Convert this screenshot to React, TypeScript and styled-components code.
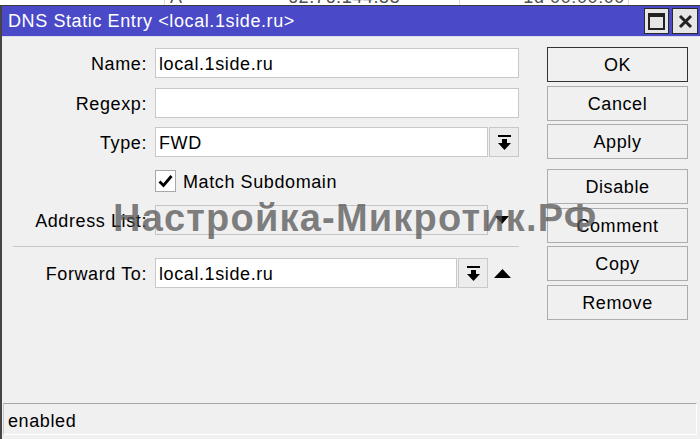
import React from "react";
import styled, { createGlobalStyle } from "styled-components";

const GlobalStyle = createGlobalStyle`
  html, body { margin: 0; padding: 0; }
  body {
    font-family: "Liberation Sans", Arial, sans-serif;
    background: #ffffff;
  }
`;

const Page = styled.div`
  position: relative;
  width: 700px;
  height: 439px;
  overflow: hidden;
  display: flex;
  flex-direction: column;
  background: #ffffff;
`;

const BackStrip = styled.div`
  height: 5px;
  flex: none;
  display: flex;
  overflow: hidden;
  background: #ffffff;
  border-bottom: 1px solid #3a3a3a;
`;

const BackCell = styled.div<{ $w: number; $line?: boolean; $right?: boolean }>`
  width: ${(p) => p.$w}px;
  flex: none;
  box-sizing: border-box;
  border-right: ${(p) => (p.$line ? "1px solid #d8d8d8" : "none")};
  text-align: ${(p) => (p.$right ? "right" : "left")};
  padding: 0 ${(p) => (p.$right ? 3 : 0)}px 0 ${(p) => (p.$right ? 0 : 5)}px;
  font-size: 18px;
  line-height: 18px;
  margin-top: -12px;
  color: #505050;
  letter-spacing: 0.6px;
  white-space: nowrap;
`;

const Window = styled.div`
  flex: 1;
  display: flex;
  flex-direction: column;
  background: #f0f0f0;
  border-left: 2px solid #454545;
  min-height: 0;
`;

const TitleBar = styled.div`
  height: 30px;
  flex: none;
  display: flex;
  align-items: center;
  padding: 0 2px 0 6px;
  background: #4a4ac8;
  border-bottom: 1px solid #dcdcf0;
`;

const Title = styled.div`
  color: #ffffff;
  font-size: 18px;
  letter-spacing: 0.6px;
  white-space: nowrap;
  padding-top: 1px;
`;

const TitleButtons = styled.div`
  margin-left: auto;
  display: flex;
  gap: 3px;
`;

const TitleButton = styled.div<{ $w: number }>`
  width: ${(p) => p.$w}px;
  height: 26px;
  box-sizing: border-box;
  border: 1px solid #2a2a2a;
  background: #e6e6e6;
  display: flex;
  align-items: center;
  justify-content: center;
`;

const Body = styled.div`
  flex: 1;
  display: flex;
  min-height: 0;
`;

const Form = styled.div`
  width: 517px;
  flex: none;
  display: flex;
  flex-direction: column;
  padding-top: 11px;
`;

const Row = styled.div<{ $mt?: number; $h?: number }>`
  display: flex;
  align-items: center;
  height: ${(p) => p.$h ?? 30}px;
  margin-top: ${(p) => p.$mt ?? 0}px;
  gap: 8px;
`;

const Label = styled.div`
  width: 145px;
  flex: none;
  text-align: right;
  font-size: 18px;
  letter-spacing: 0.6px;
  color: #000000;
  white-space: nowrap;
  padding-top: 2px;
`;

const FieldGroup = styled.div`
  display: flex;
  align-items: center;
  gap: 1px;
  height: 100%;
`;

const Input = styled.div<{ $w: number; $disabled?: boolean }>`
  width: ${(p) => p.$w}px;
  height: 100%;
  box-sizing: border-box;
  border: 1px solid ${(p) => (p.$disabled ? "#c4c4c4" : "#c8c8c8")};
  background: ${(p) => (p.$disabled ? "transparent" : "#ffffff")};
  display: flex;
  align-items: center;
  padding: 2px 0 0 3px;
  font-size: 18px;
  letter-spacing: 0.6px;
  color: #000000;
  white-space: nowrap;
  overflow: hidden;
`;

const DropButton = styled.div`
  width: 30px;
  height: 100%;
  box-sizing: border-box;
  border: 1px solid #c8c8c8;
  background: #ececec;
  display: flex;
  align-items: center;
  justify-content: center;
`;

const ArrowSlot = styled.div`
  width: 24px;
  display: flex;
  align-items: center;
  justify-content: center;
  margin-left: 1px;
`;

const CheckRow = styled.label`
  display: flex;
  align-items: center;
  gap: 7px;
  font-size: 18px;
  letter-spacing: 0.6px;
  color: #000000;
  white-space: nowrap;
`;

const CheckText = styled.span`
  padding-top: 2px;
`;

const CheckBox = styled.div`
  width: 21px;
  height: 22px;
  box-sizing: border-box;
  border: 1px solid #a8a8a8;
  background: #ffffff;
  display: flex;
  align-items: center;
  justify-content: center;
`;

const Spacer = styled.div`
  width: 145px;
  flex: none;
`;

const Separator = styled.div`
  height: 1px;
  margin: 11px 0 0 11px;
  background: #c8c8c8;
`;

const ButtonColumn = styled.div`
  margin-left: 28px;
  padding-top: 10px;
  display: flex;
  flex-direction: column;
  width: 141px;
`;

const ActionButton = styled.div<{ $primary?: boolean; $mt?: number }>`
  height: 35px;
  margin-top: ${(p) => p.$mt ?? 0}px;
  box-sizing: border-box;
  border: 1px solid ${(p) => (p.$primary ? "#333333" : "#adadad")};
  background: #f0f0f0;
  display: flex;
  align-items: center;
  justify-content: center;
  padding-top: 2px;
  font-size: 18px;
  letter-spacing: 0.6px;
  color: #000000;
`;

const StatusBar = styled.div`
  height: 32px;
  flex: none;
  margin: 0 3px 4px 1px;
  box-sizing: border-box;
  border-top: 1px solid #a6a6a6;
  border-left: 1px solid #c8c8c8;
  border-right: 1px solid #ffffff;
  border-bottom: 1px solid #ffffff;
  display: flex;
  align-items: center;
  padding: 4px 0 0 4px;
  font-size: 18px;
  letter-spacing: 0.6px;
  color: #000000;
`;

const Watermark = styled.div`
  position: absolute;
  left: 113px;
  top: 199px;
  font-family: "Liberation Sans", Arial, sans-serif;
  font-weight: bold;
  font-size: 38px;
  line-height: 38px;
  letter-spacing: 1.2px;
  color: rgba(80, 80, 80, 0.72);
  white-space: nowrap;
  pointer-events: none;
`;

const DropIcon = () => (
  <svg width="13" height="15" viewBox="0 0 13 15">
    <rect x="0" y="0" width="13" height="2" fill="#000" />
    <rect x="4" y="4" width="5" height="4" fill="#000" />
    <polygon points="0,8 13,8 6.5,15" fill="#000" />
  </svg>
);

const TriDown = () => (
  <svg width="14" height="8" viewBox="0 0 14 8">
    <polygon points="0,0 14,0 7,8" fill="#000" />
  </svg>
);

const TriUp = () => (
  <svg width="17" height="9" viewBox="0 0 17 9">
    <polygon points="0,9 17,9 8.5,0" fill="#000" />
  </svg>
);

const MaxIcon = () => (
  <svg width="17" height="17" viewBox="0 0 17 17">
    <rect x="1" y="1" width="15" height="15" fill="none" stroke="#222" strokeWidth="2" />
    <rect x="1" y="1" width="15" height="3" fill="#222" />
  </svg>
);

const CloseIcon = () => (
  <svg width="15" height="15" viewBox="0 0 15 15">
    <path d="M2 2 L13 13 M13 2 L2 13" stroke="#222" strokeWidth="3" />
  </svg>
);

const CheckMark = () => (
  <svg width="15" height="14" viewBox="0 0 15 14">
    <path d="M1.5 7.5 L5.5 11.5 L13.5 2" fill="none" stroke="#000" strokeWidth="2.8" />
  </svg>
);

const buttons: { label: string; primary?: boolean; mt: number }[] = [
  { label: "OK", primary: true, mt: 0 },
  { label: "Cancel", mt: 3.5 },
  { label: "Apply", mt: 3.5 },
  { label: "Disable", mt: 10 },
  { label: "Comment", mt: 3.5 },
  { label: "Copy", mt: 3.5 },
  { label: "Remove", mt: 3.5 },
];

export default function App() {
  return (
    <Page>
      <GlobalStyle />
      <BackStrip>
        <BackCell $w={165} $line />
        <BackCell $w={118}>A</BackCell>
        <BackCell $w={177} $line>62.76.144.55</BackCell>
        <BackCell $w={169} $line $right>1d 00:00:00</BackCell>
        <BackCell $w={71} />
      </BackStrip>
      <Window>
        <TitleBar>
          <Title>DNS Static Entry &lt;local.1side.ru&gt;</Title>
          <TitleButtons>
            <TitleButton $w={25}>
              <MaxIcon />
            </TitleButton>
            <TitleButton $w={26}>
              <CloseIcon />
            </TitleButton>
          </TitleButtons>
        </TitleBar>
        <Body>
          <Form>
            <Row>
              <Label>Name:</Label>
              <Input $w={364}>local.1side.ru</Input>
            </Row>
            <Row $mt={10}>
              <Label>Regexp:</Label>
              <Input $w={364} />
            </Row>
            <Row $mt={9}>
              <Label>Type:</Label>
              <FieldGroup>
                <Input $w={333}>FWD</Input>
                <DropButton>
                  <DropIcon />
                </DropButton>
              </FieldGroup>
            </Row>
            <Row $mt={13} $h={22}>
              <Spacer />
              <CheckRow>
                <CheckBox>
                  <CheckMark />
                </CheckBox>
                <CheckText>Match Subdomain</CheckText>
              </CheckRow>
            </Row>
            <Row $mt={13}>
              <Label>Address List:</Label>
              <FieldGroup>
                <Input $w={333} $disabled />
                <ArrowSlot>
                  <TriDown />
                </ArrowSlot>
              </FieldGroup>
            </Row>
            <Separator />
            <Row $mt={11}>
              <Label>Forward To:</Label>
              <FieldGroup>
                <Input $w={302}>local.1side.ru</Input>
                <DropButton>
                  <DropIcon />
                </DropButton>
                <ArrowSlot>
                  <TriUp />
                </ArrowSlot>
              </FieldGroup>
            </Row>
          </Form>
          <ButtonColumn>
            {buttons.map((b) => (
              <ActionButton key={b.label} $primary={b.primary} $mt={b.mt}>
                {b.label}
              </ActionButton>
            ))}
          </ButtonColumn>
        </Body>
        <StatusBar>enabled</StatusBar>
      </Window>
      <Watermark>Настройка-Микротик.РФ</Watermark>
    </Page>
  );
}
